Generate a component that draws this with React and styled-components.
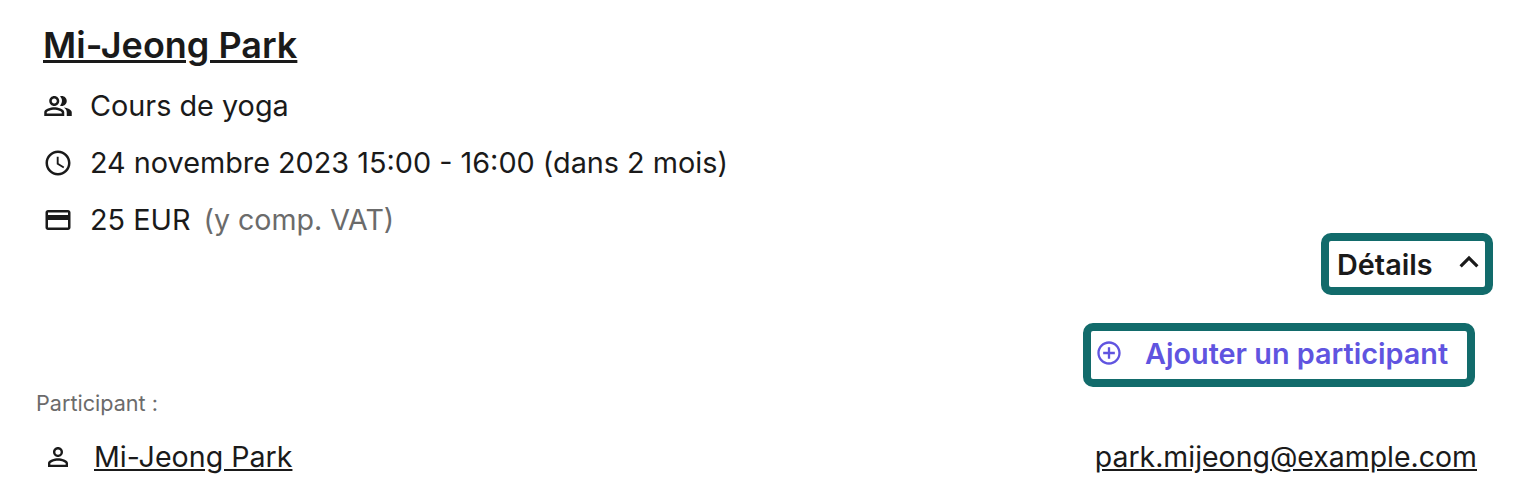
import React from "react";
import styled, { createGlobalStyle } from "styled-components";
import {
  MdOutlinePeopleAlt,
  MdOutlineSchedule,
  MdOutlineCreditCard,
  MdPersonOutline,
  MdControlPoint,
  MdExpandLess,
} from "react-icons/md";

const GlobalStyle = createGlobalStyle`
  html, body {
    margin: 0;
    background: #fff;
  }
  body {
    font-family: Inter, "Liberation Sans", sans-serif;
    color: #1a1a1a;
  }
`;

const App = () => {
  return (
    <Page>
      <GlobalStyle />
      <Name href="#">Mi-Jeong Park</Name>
      <InfoList>
        <InfoRow>
          <MdOutlinePeopleAlt size={30} />
          <span>Cours de yoga</span>
        </InfoRow>
        <InfoRow>
          <MdOutlineSchedule size={30} />
          <span>24 novembre 2023 15:00 - 16:00 (dans 2 mois)</span>
        </InfoRow>
        <InfoRow>
          <MdOutlineCreditCard size={30} />
          <span>25 EUR</span>
          <Muted>(y comp. VAT)</Muted>
        </InfoRow>
      </InfoList>
      <DetailsLine>
        <DetailsButton>
          Détails
          <MdExpandLess size={38} />
        </DetailsButton>
      </DetailsLine>
      <AddLine>
        <AddButton>
          <MdControlPoint size={28} />
          Ajouter un participant
        </AddButton>
      </AddLine>
      <Label>Participant :</Label>
      <ParticipantRow>
        <ParticipantName>
          <MdPersonOutline size={30} />
          <a href="#">Mi-Jeong Park</a>
        </ParticipantName>
        <Email href="#">park.mijeong@example.com</Email>
      </ParticipantRow>
    </Page>
  );
};

const Page = styled.div`
  width: 1516px;
  height: 496px;
  box-sizing: border-box;
  padding: 24px 39px 0 36px;
  overflow: hidden;
  background: #fff;
`;

const Name = styled.a`
  display: block;
  width: fit-content;
  margin-left: 7px;
  font-size: 36px;
  line-height: 42px;
  font-weight: 600;
  color: #1a1a1a;
  text-decoration: underline;
`;

const InfoList = styled.div`
  margin: 27px 0 0 7px;
  display: flex;
  flex-direction: column;
  gap: 31px;
`;

const InfoRow = styled.div`
  display: flex;
  align-items: center;
  gap: 17px;
  font-size: 28.8px;
  line-height: 26px;
  height: 26px;

  svg {
    flex-shrink: 0;
  }
`;

const Muted = styled.span`
  color: #6b6b6b;
  margin-left: -4px;
  font-size: 28.6px;
`;

const DetailsLine = styled.div`
  display: flex;
  justify-content: flex-end;
  margin-right: -16px;
`;

const DetailsButton = styled.button`
  display: flex;
  align-items: center;
  justify-content: space-between;
  width: 172px;
  height: 62px;
  box-sizing: border-box;
  padding: 0 0 0 8px;
  background: #fff;
  border: 8px solid #126b6b;
  border-radius: 10px;
  font-family: inherit;
  font-size: 28.8px;
  font-weight: 600;
  color: #1a1a1a;

  svg {
    margin: -4px -3px 0 0;
  }
`;

const AddLine = styled.div`
  display: flex;
  justify-content: flex-end;
  margin-top: 28px;
  margin-right: 2px;
`;

const AddButton = styled.button`
  display: flex;
  align-items: center;
  gap: 22px;
  height: 64px;
  width: 392px;
  box-sizing: border-box;
  padding: 0 0 4px 4px;
  background: #fff;
  border: 8px solid #126b6b;
  border-radius: 10px;
  font-family: inherit;
  font-size: 28.8px;
  font-weight: 600;
  color: #6054e0;
`;

const Label = styled.div`
  margin-top: 2px;
  font-size: 21.6px;
  line-height: 28px;
  color: #6b6b6b;
`;

const ParticipantRow = styled.div`
  display: flex;
  align-items: center;
  justify-content: space-between;
  margin-top: 23px;
  padding-left: 7px;
  font-size: 28.6px;
  line-height: 34px;

  a {
    color: #1a1a1a;
    text-decoration: underline;
  }
`;

const ParticipantName = styled.div`
  display: flex;
  align-items: center;
  gap: 21px;
`;

const Email = styled.a`
  font-size: 28.45px;
`;

export default App;
